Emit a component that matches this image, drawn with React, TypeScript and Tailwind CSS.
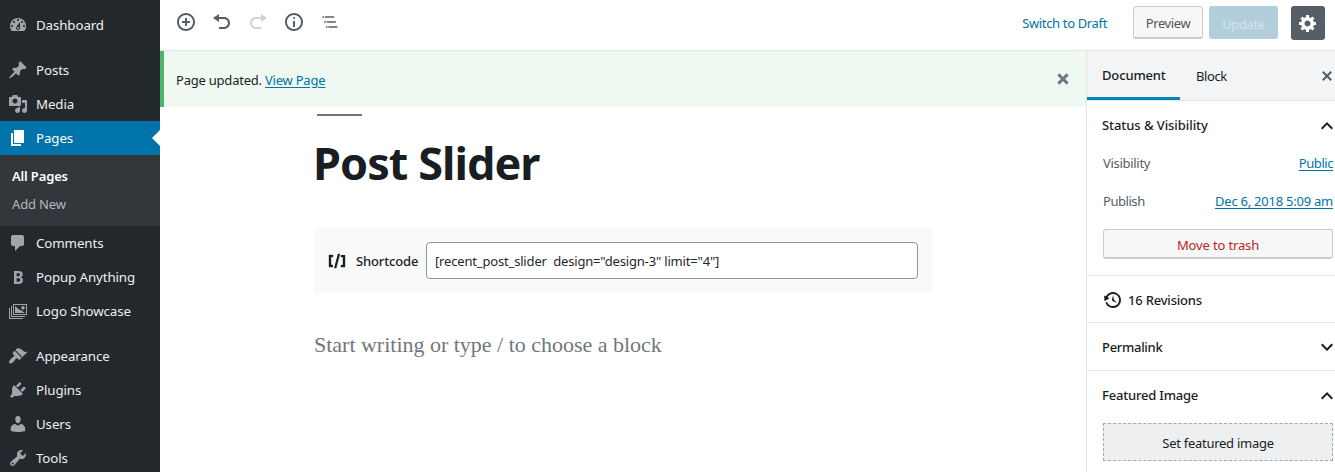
const paths = {
  dashboard:
    "M3.76 16h12.48c1.1-1.37 1.76-3.11 1.76-5 0-4.42-3.58-8-8-8s-8 3.58-8 8c0 1.89.66 3.63 1.76 5zM10 4c.55 0 1 .45 1 1s-.45 1-1 1-1-.45-1-1 .45-1 1-1zM6 6c.55 0 1 .45 1 1s-.45 1-1 1-1-.45-1-1 .45-1 1-1zm8 0c.55 0 1 .45 1 1s-.45 1-1 1-1-.45-1-1 .45-1 1-1zm-5.37 5.55L12 7v6c0 1.1-.9 2-2 2s-2-.9-2-2c0-.57.24-1.08.63-1.45zM4 10c.55 0 1 .45 1 1s-.45 1-1 1-1-.45-1-1 .45-1 1-1zm12 0c.55 0 1 .45 1 1s-.45 1-1 1-1-.45-1-1 .45-1 1-1zm-5 3c0-.55-.45-1-1-1s-1 .45-1 1 .45 1 1 1 1-.45 1-1z",
  pin: "M10.44 3.02l1.82-1.82 6.36 6.35-1.83 1.82c-1.05-.68-2.48-.57-3.41.36l-.75.75c-.92.93-1.04 2.35-.35 3.41l-1.83 1.82-2.41-2.41-2.8 2.79c-.42.42-3.38 2.71-3.8 2.29s1.86-3.39 2.28-3.81l2.79-2.79L4.1 9.36l1.83-1.82c1.05.69 2.48.57 3.4-.36l.75-.75c.93-.92 1.05-2.35.36-3.41z",
  media:
    "M13 11V4c0-.55-.45-1-1-1h-1.67L9 1H5L3.67 3H2c-.55 0-1 .45-1 1v7c0 .55.45 1 1 1h10c.55 0 1-.45 1-1zM7 4.5c1.38 0 2.5 1.12 2.5 2.5S8.38 9.5 7 9.5 4.5 8.38 4.5 7 5.62 4.5 7 4.5zM14 6h5v10.5c0 1.38-1.12 2.5-2.5 2.5S14 17.88 14 16.5s1.12-2.5 2.5-2.5c.17 0 .34.02.5.05V9h-3V6zm-4 8.05V13h2v3.5c0 1.38-1.12 2.5-2.5 2.5S7 17.88 7 16.5 8.12 14 9.5 14c.17 0 .34.02.5.05z",
  page: "M6 15V2h10v13H6zm-1 1h8v2H3V5h2v11z",
  comment:
    "M5 2h9c1.1 0 2 .9 2 2v7c0 1.1-.9 2-2 2h-2l-5 5v-5H5c-1.1 0-2-.9-2-2V4c0-1.1.9-2 2-2z",
  bold: "M6 4v13h4.54c1.37 0 2.46-.33 3.26-1 .8-.66 1.2-1.58 1.2-2.77 0-.84-.17-1.51-.51-2.01s-.9-.85-1.67-1.03v-.09c.57-.1 1.02-.4 1.36-.9s.51-1.13.51-1.91c0-1.14-.39-1.98-1.17-2.5C12.75 4.26 11.5 4 9.78 4H6zm2.57 5.15V6.26h1.36c.73 0 1.27.11 1.61.32.34.22.51.58.51 1.07 0 .54-.16.92-.47 1.15s-.82.35-1.51.35h-1.5zm0 2.19h1.6c1.44 0 2.16.53 2.16 1.61 0 .6-.17 1.05-.51 1.34s-.86.43-1.57.43H8.57v-3.38z",
  images:
    "M5 3h14v11H5zM6 4v9h12V4zM3 5h1v10h13v1H3zM1 7h1v10h13v1H1zM7 12V5l4 3.5 2.5 1L17 12zM15 5a1.8 1.8 0 1 0 .01 0z",
  brush:
    "M14.48 11.06L7.41 3.99l1.5-1.5c.5-.56 2.3-.47 3.51.32 1.21.8 1.43 1.28 2.91 2.1 1.18.64 2.45 1.26 4.45.85zm-.71.71L6.7 4.7 4.93 6.47c-.39.39-.39 1.02 0 1.41l1.06 1.06c.39.39.39 1.03 0 1.42-.6.6-1.43 1.11-2.21 1.69-.35.26-.7.53-1.01.84C1.43 14.23.4 16.08 1.4 17.07c.99 1 2.84-.03 4.18-1.36.31-.31.58-.66.85-1.02.57-.78 1.08-1.61 1.69-2.21.39-.39 1.02-.39 1.41 0l1.06 1.06c.39.39 1.02.39 1.41 0z",
  plug: "M13.11 4.36L9.87 7.6 8 5.73l3.24-3.24c.35-.34 1.05-.2 1.56.32.52.51.66 1.21.31 1.55zm-8 1.77l.91-1.12 9.01 9.01-1.19.84c-.71.71-2.63 1.16-3.82 1.16H6.14L4.9 17.26c-.59.59-1.54.59-2.12 0-.59-.58-.59-1.53 0-2.12l1.24-1.24v-3.88c0-1.13.4-3.19 1.09-3.89zm7.26 3.97l3.24-3.24c.34-.35 1.04-.21 1.55.31.52.51.66 1.21.31 1.55l-3.24 3.25z",
  user: "M10 9.25c-2.27 0-2.73-3.44-2.73-3.44C7 4.02 7.82 2 9.97 2c2.16 0 2.98 2.02 2.71 3.81 0 0-.41 3.44-2.68 3.44zm0 2.57L12.72 10c2.39 0 4.52 2.33 4.52 4.53v2.49s-3.65 1.13-7.24 1.13c-3.65 0-7.24-1.13-7.24-1.13v-2.49c0-2.25 1.94-4.48 4.47-4.48z",
  wrench:
    "M16.68 9.77c-1.34 1.34-3.3 1.67-4.95.99l-5.41 6.52c-.99.99-2.59.99-3.58 0s-.99-2.59 0-3.57l6.52-5.42c-.68-1.65-.35-3.61.99-4.95 1.28-1.28 3.12-1.62 4.72-1.06l-2.89 2.89 2.82 2.82 2.86-2.87c.53 1.58.18 3.39-1.08 4.65zM3.81 16.21c.4.39 1.04.39 1.43 0 .4-.4.4-1.04 0-1.43-.39-.4-1.03-.4-1.43 0-.39.39-.39 1.03 0 1.43z",
  insert:
    "M10 1c-5 0-9 4-9 9s4 9 9 9 9-4 9-9-4-9-9-9zm0 16c-3.9 0-7-3.1-7-7s3.1-7 7-7 7 3.1 7 7-3.1 7-7 7zm1-11H9v3H6v2h3v3h2v-3h3V9h-3V6z",
  undo: "M12 5H7V2L1 6l6 4V7h5c2.2 0 4 1.8 4 4s-1.8 4-4 4H7v2h5c3.3 0 6-2.7 6-6s-2.7-6-6-6z",
  redo: "M8 5h5V2l6 4-6 4V7H8c-2.2 0-4 1.8-4 4s1.8 4 4 4h5v2H8c-3.3 0-6-2.7-6-6s2.7-6 6-6z",
  info: "M9 15h2V9H9v6zm1-10c-.5 0-1 .5-1 1s.5 1 1 1 1-.5 1-1-.5-1-1-1zm0-4c-5 0-9 4-9 9s4 9 9 9 9-4 9-9-4-9-9-9zm0 16c-3.9 0-7-3.1-7-7s3.1-7 7-7 7 3.1 7 7-3.1 7-7 7z",
  outline:
    "M5 5H3v2h2V5zm3 8h11v-2H8v2zm9-8H6v2h11V5zM7 11H5v2h2v-2zm0 8h2v-2H7v2zm3-2v2h11v-2H10z",
  gear: "M18 12h-2.18c-.17.7-.44 1.35-.81 1.93l1.54 1.54-2.1 2.1-1.54-1.54c-.58.36-1.23.63-1.91.79V19H8v-2.18c-.68-.16-1.33-.43-1.91-.79l-1.54 1.54-2.12-2.12 1.54-1.54c-.36-.58-.63-1.23-.79-1.91H1V9.03h2.17c.16-.7.44-1.35.8-1.94L2.43 5.55l2.1-2.1 1.54 1.54c.58-.37 1.24-.64 1.93-.81V2h3v2.18c.68.16 1.33.43 1.91.79l1.54-1.54 2.12 2.12-1.54 1.54c.36.59.64 1.24.8 1.94H18V12zm-8.5 1.5c1.66 0 3-1.34 3-3s-1.34-3-3-3-3 1.34-3 3 1.34 3 3 3z",
  cross:
    "M12.12 10l3.53 3.53-2.12 2.12L10 12.12l-3.54 3.54-2.12-2.12L7.88 10 4.34 6.46l2.12-2.12L10 7.88l3.54-3.53 2.12 2.12z",
  crossThin:
    "M14.95 6.46L11.41 10l3.54 3.54-1.41 1.41L10 11.42l-3.53 3.53-1.42-1.42L8.58 10 5.05 6.47l1.42-1.42L10 8.58l3.54-3.53z",
  backup:
    "M13.65 2.88c3.93 2.01 5.48 6.84 3.47 10.77s-6.83 5.48-10.77 3.47c-1.87-.96-3.2-2.56-3.86-4.4l1.64-1.03c.45 1.57 1.52 2.95 3.08 3.76 3.01 1.54 6.69.35 8.23-2.66 1.55-3.01.36-6.69-2.65-8.24C9.78 3.01 6.1 4.2 4.56 7.21l1.88.97-4.95 3.08-.39-5.82 1.78.91C4.9 2.4 9.75.89 13.65 2.88zm-4.36 7.83C9.11 10.53 9 10.28 9 10c0-.07.03-.12.04-.19h-.01L10 5l.97 4.81L14 13l-4.5-2.12.02-.02c-.08-.04-.16-.09-.23-.15z",
  shortcode:
    "M6 14H4V6h2V4H2v12h4M7.1 17h2.1l3.7-14h-2.1M14 4v2h2v8h-2v2h4V4",
  up: "M12 8l-6 6 1.41 1.41L12 10.83l4.59 4.58L18 14z",
  down: "M7.41 8.59L12 13.17l4.59-4.58L18 10l-6 6-6-6 1.41-1.41z",
};

type IconName = keyof typeof paths;

function Icon({ name, className = "size-5", box = 20 }: { name: IconName; className?: string; box?: number }) {
  return (
    <svg viewBox={`0 0 ${box} ${box}`} className={`shrink-0 fill-current ${className}`} fillRule="evenodd" aria-hidden="true">
      <path d={paths[name]} />
    </svg>
  );
}

function MenuItem({ icon, label, active = false }: { icon: IconName; label: string; active?: boolean }) {
  return (
    <a className={`relative flex h-[34px] shrink-0 items-center pl-2 text-[13.3px] tracking-[-0.1px] ${active ? "bg-[#0073aa] text-white" : "text-[#eee]"}`}>
      <Icon name={icon} className={`size-5 ${active ? "text-white" : "text-[#a0a5aa]"}`} />
      <span className="ml-2 whitespace-nowrap pt-px">{label}</span>
      {active && <span className="absolute right-0 top-[9px] border-y-8 border-r-8 border-y-transparent border-r-white" />}
    </a>
  );
}

function Sidebar() {
  return (
    <nav className="flex w-40 shrink-0 flex-col overflow-hidden bg-[#23282d] pt-2">
      <MenuItem icon="dashboard" label="Dashboard" />
      <div className="h-[11px] shrink-0" />
      <MenuItem icon="pin" label="Posts" />
      <MenuItem icon="media" label="Media" />
      <MenuItem icon="page" label="Pages" active />
      <div className="flex h-[71px] shrink-0 flex-col bg-[#32373c] pl-3 pt-[7px] text-[13px] leading-7 tracking-[-0.15px]">
        <a className="font-semibold text-white">All Pages</a>
        <a className="text-[#b4b9be]">Add New</a>
      </div>
      <MenuItem icon="comment" label="Comments" />
      <MenuItem icon="bold" label="Popup Anything" />
      <MenuItem icon="images" label="Logo Showcase" />
      <div className="h-[11px] shrink-0" />
      <MenuItem icon="brush" label="Appearance" />
      <MenuItem icon="plug" label="Plugins" />
      <MenuItem icon="user" label="Users" />
      <MenuItem icon="wrench" label="Tools" />
    </nav>
  );
}

function Toolbar() {
  return (
    <header className="flex h-[51px] shrink-0 items-start border-b border-[#e2e4e7] bg-white text-[13px]">
      <div className="flex gap-4 pl-4 pt-3 text-[#555d66]">
        <Icon name="insert" />
        <Icon name="undo" />
        <Icon name="redo" className="size-5 text-[#cfd1d4]" />
        <Icon name="info" />
        <Icon name="outline" box={24} />
      </div>
      <div className="ml-auto flex pr-2.5 pt-1.5">
        <a className="mr-[26px] flex h-[34px] items-center pt-px tracking-[-0.35px] text-[#0073aa]">Switch to Draft</a>
        <button className="flex h-[33px] w-[70px] items-center justify-center rounded-[3px] border border-b-2 border-[#ccc] bg-[#f7f7f7] pt-1 tracking-[-0.4px] text-[#555]">Preview</button>
        <button className="ml-1.5 flex h-[33px] w-[69px] items-center justify-center rounded-[3px] bg-[#b2ceda] pt-1 tracking-[-0.35px] text-[#d0e5f0]">Update</button>
        <button className="ml-[13px] flex size-[34px] items-center justify-center rounded-[3px] bg-[#555d66] text-white">
          <Icon name="gear" />
        </button>
      </div>
    </header>
  );
}

function Editor() {
  return (
    <main className="flex min-w-0 flex-1 flex-col bg-white">
      <div className="flex h-14 shrink-0 items-center border-l-4 border-[#4ab866] bg-[#eff9f1] pl-3 pr-[13px] text-[13px] text-[#191e23]">
        <p className="pt-[3px] tracking-[-0.22px]">
          Page updated. <a className="text-[#0073aa] underline underline-offset-2">View Page</a>
        </p>
        <Icon name="cross" className="ml-auto size-5 text-[#6c7781]" />
      </div>
      <div className="ml-[154px] flex w-[618px] flex-col">
        <div className="ml-[3px] mt-[7px] h-0.5 w-[45px] bg-[#767676]" />
        <h1 className="-ml-px mt-4 h-[62px] whitespace-nowrap text-[45px] font-bold leading-[62px] tracking-[-0.95px] text-[#191e23]">Post Slider</h1>
        <div className="mt-[34px] flex h-[65px] items-center bg-[#f8f9f9] px-3.5 text-[13px] text-[#191e23]">
          <Icon name="shortcode" className="-ml-px size-5 stroke-current stroke-[0.4]" />
          <span className="ml-[9px] w-[70px] pt-0.5 font-medium tracking-[-0.15px]">Shortcode</span>
          <div className="flex h-[37px] flex-1 items-center whitespace-pre rounded border border-[#8d96a0] bg-white px-2 pt-0.5 tracking-[-0.17px] text-[#23282d]">{'[recent_post_slider  design="design-3" limit="4"]'}</div>
        </div>
        <p className="mt-[37px] font-['Liberation_Serif',serif] text-[22px] leading-[30px] tracking-[-0.01px] text-[#72777c]">Start writing or type / to choose a block</p>
      </div>
    </main>
  );
}

function Settings() {
  return (
    <aside className="flex w-[249px] shrink-0 flex-col overflow-hidden border-l border-[#e2e4e7] bg-white text-[13px] text-[#191e23]">
      <div className="flex h-[50px] shrink-0 border-b border-[#e2e4e7] bg-[#f3f4f5]">
        <div className="flex w-[93px] items-center border-b-3 border-[#0085ba] pl-[15px] pt-1 font-medium tracking-[-0.15px]">Document</div>
        <div className="flex items-center pl-4 pt-0.5 tracking-[-0.4px]">Block</div>
        <Icon name="crossThin" className="-mr-0.5 ml-auto mt-[15px] size-5 text-[#555d66]" />
      </div>
      <section className="flex h-[175px] shrink-0 flex-col border-b border-[#e2e4e7] pl-[15px]">
        <div className="flex h-[50px] items-center justify-between font-medium tracking-[-0.07px]">
          Status &amp; Visibility
          <Icon name="up" box={24} className="-mr-1 size-6" />
        </div>
        <div className="ml-px flex h-[26px] items-center justify-between pr-0.5 text-[#555d66]">
          <span className="tracking-[-0.3px]">Visibility</span>
          <a className="tracking-[-0.45px] text-[#0073aa] underline underline-offset-2">Public</a>
        </div>
        <div className="ml-px mt-3 flex h-[26px] items-center justify-between pr-0.5 text-[#555d66]">
          <span className="tracking-[-0.45px]">Publish</span>
          <a className="tracking-[-0.24px] text-[#0073aa] underline underline-offset-2">Dec 6, 2018 5:09 am</a>
        </div>
        <button className="ml-px mt-[14px] flex h-[30px] w-[230px] items-center justify-center rounded-[3px] border border-b-2 border-[#ccc] bg-[#f7f7f7] pt-1 tracking-[-0.15px] text-[#b52727]">Move to trash</button>
      </section>
      <section className="flex h-[47px] shrink-0 items-center border-b border-[#e2e4e7] pl-4 font-medium tracking-[-0.2px]">
        <Icon name="backup" className="mt-0.5 size-5" />
        <span className="ml-[5px] pt-[3px]">16 Revisions</span>
      </section>
      <section className="flex h-12 shrink-0 items-center justify-between border-b border-[#e2e4e7] pl-[15px] font-medium tracking-[-0.3px]">
        <span className="pt-0.5">Permalink</span>
        <Icon name="down" box={24} className="-mr-1 size-6" />
      </section>
      <section className="flex shrink-0 flex-col pl-[15px]">
        <div className="flex h-[50px] items-center justify-between font-medium tracking-[-0.2px]">
          Featured Image
          <Icon name="up" box={24} className="-mr-1 size-6" />
        </div>
        <button className="ml-px mt-0.5 flex h-[38px] w-[230px] items-center justify-center border border-dashed border-[#a2aab2] bg-[#edeff0] pt-1 tracking-[-0.27px]">Set featured image</button>
      </section>
    </aside>
  );
}

export default function App() {
  return (
    <div className="flex h-[472px] w-[1335px] overflow-hidden bg-white font-['Noto_Sans',sans-serif]">
      <Sidebar />
      <div className="flex min-w-0 flex-1 flex-col">
        <Toolbar />
        <div className="flex min-h-0 flex-1">
          <Editor />
          <Settings />
        </div>
      </div>
    </div>
  );
}
